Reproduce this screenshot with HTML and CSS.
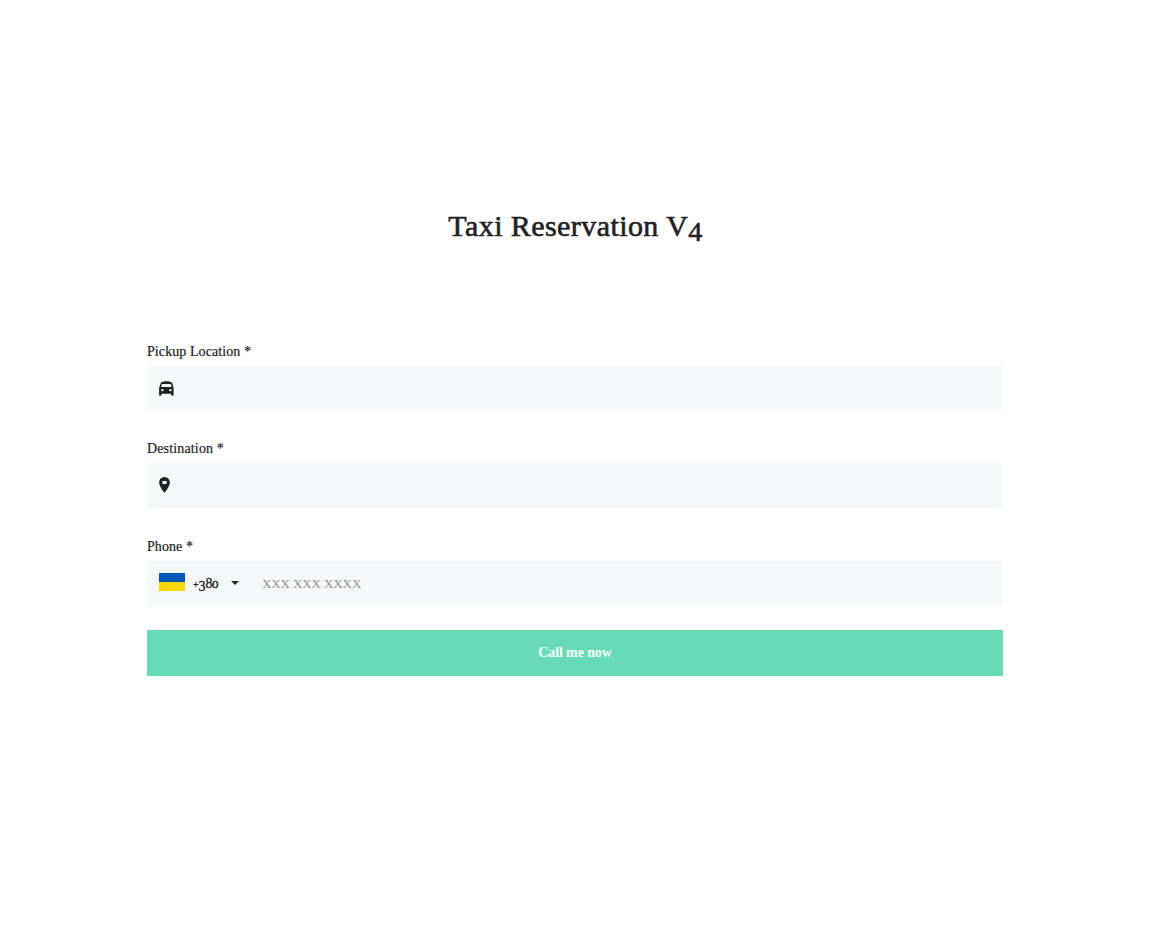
FILE: index.html
```html
<!DOCTYPE html>
<html lang="en">
<head>
<meta charset="utf-8">
<title>Taxi Reservation V4</title>
<link rel="stylesheet" href="styles.css">
</head>
<body>
<main class="page">
  <h1 class="title">Taxi Reservation V<span class="title-num">4</span></h1>
  <form class="form">
    <div class="field">
      <label class="label label-pickup">Pickup Location *</label>
      <div class="control">
        <svg class="icon-taxi" viewBox="0 0 15 15" width="15" height="15" fill="#212123"><path fill-rule="evenodd" d="M4.500 1V.2h6V1h1.200c.8 0 1.200.3 1.500.9L14.600 7v6.800q0 .9-.9.900h-.6q-.9 0-.9-.9V12.700H2.500v1.100q0 .9-.9.900H1q-.9 0-.9-.9V7L1.800 1.900Q2.100 1 3.300 1ZM3 3 2.100 6H12.600L11.800 3ZM3.400 7.900a1.200 1.200 0 1 0 0 2.400a1.200 1.200 0 1 0 0-2.400ZM11.400 7.900a1.200 1.200 0 1 0 0 2.400a1.200 1.200 0 1 0 0-2.400Z"/></svg>
      </div>
    </div>
    <div class="field">
      <label class="label label-destination">Destination *</label>
      <div class="control">
        <svg class="icon-pin" viewBox="0 0 11 16" width="11" height="16" fill="#212123"><path fill-rule="evenodd" d="M5.500 0A5.400 5.400 0 0 0 .1 5.400C.1 9.400 5.500 15.800 5.500 15.800S10.900 9.400 10.900 5.400A5.400 5.400 0 0 0 5.500 0ZM4 4H7Q7.600 4 7.600 4.600V6.400Q7.600 7 7 7H4Q3.400 7 3.400 6.400V4.600Q3.400 4 4 4Z"/></svg>
      </div>
    </div>
    <div class="field field-phone">
      <label class="label label-phone">Phone *</label>
      <div class="control">
        <svg class="flag" viewBox="0 0 26 18" width="26" height="18"><path fill="#0057b8" d="M0 0h26v9H0z"/><path fill="#ffd700" d="M0 9h26v9H0z"/></svg>
        <span class="code"><span class="plus">+</span><span class="low">3</span><span>8</span><span class="small">0</span></span>
        <svg class="caret" viewBox="0 0 8 4" width="8" height="4"><path fill="#212123" d="M0 0h8L4 4z"/></svg>
        <span class="placeholder">XXX XXX XXXX</span>
      </div>
    </div>
    <button class="submit" type="button"><span class="submit-text">Call me now</span></button>
  </form>
</main>
</body>
</html>
```
FILE: styles.css
```css
body {
  margin: 0;
  background: #fff;
  color: #212123;
  font-family: "Liberation Serif", serif;
}
.page {
  width: 856px;
  margin: 0 auto;
  padding-top: 206px;
}
.title {
  margin: 0;
  height: 40px;
  line-height: 40px;
  font-size: 30px;
  font-weight: 400;
  letter-spacing: 0.42px;
  text-align: center;
  white-space: nowrap;
  text-indent: 1px;
  -webkit-text-stroke: 0.6px #212123;
}
.title-num {
  position: relative;
  top: 5px;
  font-size: 28px;
}
.form {
  padding-top: 95px;
}
.field {
  display: flex;
  flex-direction: column;
  height: 97px;
}
.field + .field {
  height: 98px;
}
.field.field-phone {
  height: 94px;
}
.label {
  flex: none;
  height: 25px;
  line-height: 21px;
  font-size: 14px;
  letter-spacing: 0.08px;
  white-space: nowrap;
  -webkit-text-stroke: 0.2px #212123;
}
.label-destination {
  letter-spacing: 0.15px;
}
.control {
  flex: none;
  display: flex;
  align-items: center;
  box-sizing: border-box;
  height: 45px;
  padding-left: 12px;
  background: #f4f8f9;
}
.icon-taxi {
  margin-bottom: 1px;
}
.icon-pin {
  margin-bottom: 1px;
}
.flag {
  margin-bottom: 3px;
}
.code {
  display: flex;
  align-items: baseline;
  width: 26px;
  margin-left: 8px;
  padding-top: 2px;
  font-size: 14px;
  line-height: 20px;
  letter-spacing: -0.1px;
  -webkit-text-stroke: 0.3px #212123;
}
.plus {
  font-size: 10px;
}
.low {
  position: relative;
  top: 3px;
}
.small {
  font-size: 10px;
  transform: scaleX(1.3);
  transform-origin: left;
}
.caret {
  margin-left: 12px;
  margin-bottom: 2px;
}
.placeholder {
  margin-left: 23px;
  font-size: 13px;
  line-height: 20px;
  letter-spacing: -0.1px;
  color: #8d9091;
  white-space: nowrap;
}
.submit {
  display: flex;
  align-items: center;
  justify-content: center;
  width: 100%;
  height: 46px;
  padding: 0;
  border: 0;
  background: #67dbb6;
  color: #fff;
  font: 700 14px/20px "Liberation Serif", serif;
  letter-spacing: -0.1px;
}
```
